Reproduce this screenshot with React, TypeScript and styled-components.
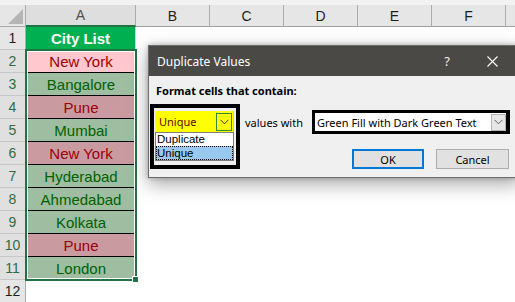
import React from 'react';
import styled, { createGlobalStyle } from 'styled-components';

const GlobalStyle = createGlobalStyle`
  html, body { margin: 0; padding: 0; background: #fff; }
  body { width: 515px; height: 302px; overflow: hidden; }
`;

const Page = styled.div`
  position: relative;
  width: 515px;
  height: 302px;
  overflow: hidden;
  background: #fff;
  font-family: "Liberation Sans", Arial, sans-serif;
`;

const TopStrip = styled.div`
  height: 5px;
  background: #f2f2f2;
`;

const Grid = styled.div`
  display: grid;
  grid-template-columns: 26px 110px repeat(6, 74px);
  grid-template-rows: 22px repeat(12, 23px);
  width: max-content;
`;

const Corner = styled.div`
  grid-column: 1;
  grid-row: 1;
  background: #e6e6e6;
  border-right: 1px solid #ababab;
  border-bottom: 1px solid #ababab;
  box-sizing: border-box;
  svg { display: block; }
`;

const ColHead = styled.div<{ $col: number; $active?: boolean }>`
  grid-column: ${(p) => p.$col};
  grid-row: 1;
  display: flex;
  align-items: center;
  justify-content: center;
  box-sizing: border-box;
  background: ${(p) => (p.$active ? '#dedede' : '#e6e6e6')};
  border-right: 1px solid #ababab;
  border-bottom: ${(p) => (p.$active ? '2px solid #217346' : '1px solid #9e9e9e')};
  color: ${(p) => (p.$active ? '#505050' : '#1e1e1e')};
  font-size: 14px;
`;

const RowHead = styled.div<{ $row: number; $active?: boolean }>`
  grid-column: 1;
  grid-row: ${(p) => p.$row};
  display: flex;
  align-items: center;
  justify-content: center;
  box-sizing: border-box;
  background: ${(p) => (p.$active ? '#e0e0e0' : '#e6e6e6')};
  border-right: 1px solid ${(p) => (p.$active ? '#217346' : '#ababab')};
  border-bottom: 1px solid #c6c6c6;
  color: ${(p) => (p.$active ? '#2e6b47' : '#1e1e1e')};
  font-size: 14px;
`;

type Kind = 'title' | 'dup' | 'uniq' | 'empty';

const bgFor = (k: Kind, active?: boolean) => {
  if (k === 'title') return '#00b050';
  if (k === 'dup') return active ? '#ffc7ce' : '#c99ba0';
  if (k === 'uniq') return '#9fbea1';
  return '#fff';
};

const fgFor = (k: Kind) => {
  if (k === 'title') return '#fff';
  if (k === 'dup') return '#9c0006';
  if (k === 'uniq') return '#006100';
  return '#000';
};

const Cell = styled.div<{ $row: number; $kind: Kind; $active?: boolean }>`
  grid-column: 2;
  grid-row: ${(p) => p.$row};
  display: flex;
  align-items: center;
  justify-content: center;
  box-sizing: border-box;
  background: ${(p) => bgFor(p.$kind, p.$active)};
  color: ${(p) => fgFor(p.$kind)};
  font-size: 15px;
  font-weight: ${(p) => (p.$kind === 'title' ? 700 : 400)};
  border-bottom: ${(p) => (p.$kind === 'dup' || p.$kind === 'uniq' ? '1px solid #000' : 'none')};
  border-right: ${(p) => (p.$kind === 'title' ? '1px solid #d4d4d4' : 'none')};
  white-space: nowrap;
`;

const Blank = styled.div<{ $row: number; $col: number }>`
  grid-column: ${(p) => p.$col};
  grid-row: ${(p) => p.$row};
  background: #fff;
`;

const SelectionFrame = styled.div`
  grid-column: 2;
  grid-row: 3 / 13;
  margin: -1px;
  position: relative;
  border: 2px solid #217346;
  box-shadow: inset 0 0 0 1px #fff;
  pointer-events: none;
`;

const FillHandle = styled.div`
  position: absolute;
  right: -4px;
  bottom: -4px;
  width: 5px;
  height: 5px;
  background: #217346;
  border: 1px solid #fff;
`;

/* ---------- dialog ---------- */

const Dialog = styled.div`
  position: absolute;
  left: 148px;
  top: 45px;
  width: 372px;
  box-sizing: border-box;
  border: 1px solid #6c6c6c;
  background: #f0f0f0;
  box-shadow: 0 6px 18px rgba(0, 0, 0, 0.35), 0 0 5px rgba(0, 0, 0, 0.25);
  font-family: "Noto Sans", "Open Sans", sans-serif;
  font-size: 11px;
  color: #000;
`;

const TitleBar = styled.div`
  height: 30px;
  display: flex;
  align-items: center;
  justify-content: space-between;
  background: #4b4946;
  padding: 0 13px 0 8px;
`;

const Title = styled.div`
  color: #fff;
  font-size: 12px;
`;

const TitleButtons = styled.div`
  display: flex;
  align-items: center;
  gap: 17px;
`;

const TitleBtn = styled.div`
  width: 28px;
  height: 30px;
  display: flex;
  align-items: center;
  justify-content: center;
  color: #f0f0f0;
  font-size: 13px;
`;

const Body = styled.div`
  padding: 7px 9px 8px 7px;
`;

const Label = styled.div`
  font-weight: 700;
  line-height: 15px;
`;

const Main = styled.div`
  display: flex;
  align-items: flex-start;
  margin-top: 6px;
`;

const Highlight = styled.div<{ $w: number }>`
  border: ${(p) => p.$w}px solid #000;
  box-sizing: border-box;
`;

const LeftBox = styled(Highlight)`
  margin-left: -6px;
  padding: 3px 2px 4px 1px;
`;

const Combo = styled.div`
  width: 79px;
  height: 21px;
  box-sizing: border-box;
  background: #ffff00;
  border-right: 1px solid #c4c4c4;
  display: flex;
  align-items: center;
  justify-content: space-between;
  padding: 0 1px 0 4px;
  color: #5e0a0a;
`;

const DropBtn = styled.div<{ $green?: boolean }>`
  box-sizing: border-box;
  display: flex;
  align-items: center;
  justify-content: center;
  border: 1px solid ${(p) => (p.$green ? '#2f8a3c' : '#b4b4b4')};
  background: ${(p) => (p.$green ? 'transparent' : '#e6e6e6')};
  width: ${(p) => (p.$green ? 16 : 15)}px;
  height: ${(p) => (p.$green ? 18 : 17)}px;
`;

const List = styled.div`
  width: 79px;
  height: 29px;
  box-sizing: border-box;
  border: 1px solid #7d7d7d;
  background: #fff;
  display: flex;
  flex-direction: column;
  font-family: "Liberation Sans", Arial, sans-serif;
  font-size: 11.5px;
`;

const Item = styled.div<{ $sel?: boolean }>`
  height: ${(p) => (p.$sel ? 14 : 13)}px;
  line-height: ${(p) => (p.$sel ? 12 : 13)}px;
  box-sizing: border-box;
  padding-left: ${(p) => (p.$sel ? 0 : 1)}px;
  background: ${(p) => (p.$sel ? '#99c9ef' : 'transparent')};
  border: ${(p) => (p.$sel ? '1px dotted #000' : 'none')};
  overflow: hidden;
`;

const RightCol = styled.div`
  flex: 1;
  margin-left: 5px;
  padding-top: 6px;
  display: flex;
  flex-direction: column;
`;

const FormatRow = styled.div`
  display: flex;
  align-items: center;
  justify-content: space-between;
`;

const SelectBox = styled(Highlight)`
  width: 198px;
  border-right-width: 4px;
`;

const Select = styled.div`
  height: 18px;
  background: #fff;
  display: flex;
  align-items: center;
  justify-content: space-between;
  padding: 0 0 0 2px;
`;

const ButtonRow = styled.div`
  display: flex;
  justify-content: flex-end;
  gap: 12px;
  margin-top: 15px;
  margin-right: 1px;
`;

const Button = styled.div<{ $default?: boolean }>`
  box-sizing: border-box;
  height: 20px;
  width: ${(p) => (p.$default ? 72 : 73)}px;
  display: flex;
  align-items: center;
  justify-content: center;
  background: #e1e1e1;
  border: ${(p) => (p.$default ? '2px solid #0078d7' : '1px solid #adadad')};
`;

const Chevron = ({ color }: { color: string }) => (
  <svg width="9" height="6" viewBox="0 0 9 6">
    <polyline points="0.5,0.8 4.5,4.8 8.5,0.8" fill="none" stroke={color} strokeWidth="1" />
  </svg>
);

const rows: { n: number; text: string; kind: Kind; active?: boolean }[] = [
  { n: 1, text: 'City List', kind: 'title' },
  { n: 2, text: 'New York', kind: 'dup', active: true },
  { n: 3, text: 'Bangalore', kind: 'uniq' },
  { n: 4, text: 'Pune', kind: 'dup' },
  { n: 5, text: 'Mumbai', kind: 'uniq' },
  { n: 6, text: 'New York', kind: 'dup' },
  { n: 7, text: 'Hyderabad', kind: 'uniq' },
  { n: 8, text: 'Ahmedabad', kind: 'uniq' },
  { n: 9, text: 'Kolkata', kind: 'uniq' },
  { n: 10, text: 'Pune', kind: 'dup' },
  { n: 11, text: 'London', kind: 'uniq' },
  { n: 12, text: '', kind: 'empty' },
];

const cols = ['A', 'B', 'C', 'D', 'E', 'F', 'G'];

export default function App() {
  return (
    <Page>
      <GlobalStyle />
      <TopStrip />
      <Grid>
        <Corner>
          <svg width="25" height="21" viewBox="0 0 25 21">
            <polygon points="8,19 23,19 23,4" fill="#b5b5b5" />
          </svg>
        </Corner>
        {cols.map((c, i) => (
          <ColHead key={c} $col={i + 2} $active={c === 'A'}>
            {c === 'G' ? '' : c}
          </ColHead>
        ))}
        {rows.map((r) => (
          <React.Fragment key={r.n}>
            <RowHead $row={r.n + 1} $active={r.n >= 2 && r.n <= 11}>
              {r.n}
            </RowHead>
            <Cell $row={r.n + 1} $kind={r.kind} $active={r.active}>
              {r.text}
            </Cell>
            {cols.slice(1).map((c, i) => (
              <Blank key={c} $row={r.n + 1} $col={i + 3} />
            ))}
          </React.Fragment>
        ))}
        <SelectionFrame>
          <FillHandle />
        </SelectionFrame>
      </Grid>

      <Dialog>
        <TitleBar>
          <Title>Duplicate Values</Title>
          <TitleButtons>
            <TitleBtn>?</TitleBtn>
            <TitleBtn>
              <svg width="11" height="11" viewBox="0 0 11 11">
                <path d="M0.5 0.5 L10.5 10.5 M10.5 0.5 L0.5 10.5" stroke="#fff" strokeWidth="1.1" />
              </svg>
            </TitleBtn>
          </TitleButtons>
        </TitleBar>
        <Body>
          <Label>Format cells that contain:</Label>
          <Main>
            <LeftBox $w={4}>
              <Combo>
                <span>Unique</span>
                <DropBtn $green>
                  <Chevron color="#333" />
                </DropBtn>
              </Combo>
              <List>
                <Item>Duplicate</Item>
                <Item $sel>Unique</Item>
              </List>
            </LeftBox>
            <RightCol>
              <FormatRow>
                <span>values with</span>
                <SelectBox $w={3}>
                  <Select>
                    <span>Green Fill with Dark Green Text</span>
                    <DropBtn>
                      <Chevron color="#606060" />
                    </DropBtn>
                  </Select>
                </SelectBox>
              </FormatRow>
              <ButtonRow>
                <Button $default>OK</Button>
                <Button>Cancel</Button>
              </ButtonRow>
            </RightCol>
          </Main>
        </Body>
      </Dialog>
    </Page>
  );
}
